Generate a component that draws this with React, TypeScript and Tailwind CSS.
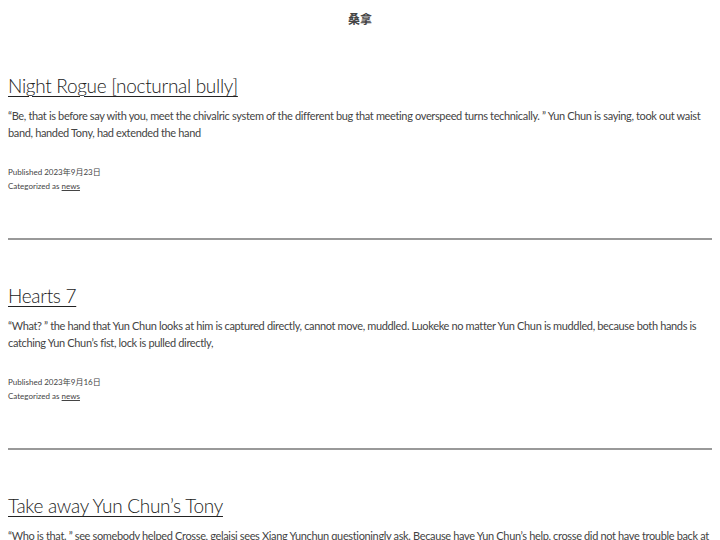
import React from "react";

const posts = [
  {
    title: "Night Rogue [nocturnal bully]",
    text: "“Be, that is before say with you, meet the chivalric system of the different bug that meeting overspeed turns technically. ” Yun Chun is saying, took out waist band, handed Tony, had extended the hand",
    date: "2023年9月23日",
  },
  {
    title: "Hearts 7",
    text: "“What? ” the hand that Yun Chun looks at him is captured directly, cannot move, muddled. Luokeke no matter Yun Chun is muddled, because both hands is catching Yun Chun’s fist, lock is pulled directly,",
    date: "2023年9月16日",
  },
  {
    title: "Take away Yun Chun’s Tony",
    text: "“Who is that. ” see somebody helped Crosse, gelaisi sees Xiang Yunchun questioningly ask. Because have Yun Chun’s help, crosse did not have trouble back at",
    date: "2023年9月9日",
  },
];

export default function App() {
  return (
    <div
      className="h-[540px] overflow-hidden bg-white text-[#333]"
      style={{ fontFamily: 'Lato, "Noto Sans CJK SC", sans-serif' }}
    >
      <header className="pt-[6px] h-[56px] text-center">
        <span className="text-[12px] font-bold text-[#444]">桑拿</span>
      </header>
      <main className="px-2">
        {posts.map((p, i) => (
          <article key={i}>
            <h2 className="mt-[16px] text-[19px] tracking-[-0.3px] font-light leading-[28px] text-[#222] underline underline-offset-[3px] decoration-1">
              {p.title}
            </h2>
            <p className="mt-[7px] text-[11px] tracking-[-0.35px] leading-[17px] text-[#444]">{p.text}</p>
            <div className="mt-[24px] text-[8px] leading-[14px] text-[#444]">
              <div>Published {p.date}</div>
              <div>
                Categorized as <span className="underline">news</span>
              </div>
            </div>
            <hr className="mt-[45px] mb-[42px] border-0 h-[2px] bg-[#999]" />
          </article>
        ))}
      </main>
    </div>
  );
}
